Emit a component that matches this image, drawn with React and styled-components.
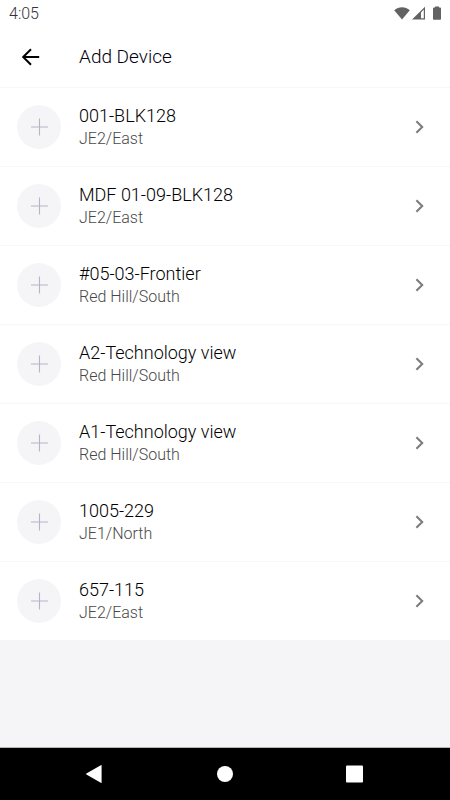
import React from "react";
import styled, { createGlobalStyle } from "styled-components";

const GlobalStyle = createGlobalStyle`
  * {
    box-sizing: border-box;
  }
  body {
    margin: 0;
    background-color: #f5f5f8;
    font-family: Roboto, "Liberation Sans", sans-serif;
    font-weight: 300;
  }
`;

const Screen = styled.div`
  display: flex;
  flex-direction: column;
  min-height: 100vh;
`;

const StatusBar = styled.div`
  display: flex;
  align-items: center;
  justify-content: space-between;
  height: 27px;
  padding: 0 8px 0 9px;
  background-color: #fff;
  color: #626262;
`;

const Clock = styled.span`
  color: #333;
  font-size: 16px;
  line-height: 28px;
`;

const StatusIcons = styled.svg`
  display: block;
  width: 48px;
  height: 16px;
`;

const Header = styled.header`
  display: flex;
  align-items: center;
  height: 60px;
  padding: 0 18px;
  background-color: #fff;
`;

const BackButton = styled.button`
  display: flex;
  width: 61px;
  padding: 0;
  border: none;
  background: none;
  color: #000;
  cursor: pointer;
`;

const Title = styled.h1`
  margin: 0;
  color: #000010;
  font-size: 19px;
  font-weight: 300;
  line-height: 24px;
`;

const DeviceList = styled.ul`
  margin: 0;
  padding: 0;
  list-style: none;
`;

const DeviceItem = styled.li`
  border-top: 1px solid #f7f7f9;
  background-color: #fff;
`;

const DeviceButton = styled.button`
  display: flex;
  align-items: center;
  width: 100%;
  height: 78px;
  padding: 0 18px 0 17px;
  border: none;
  background: none;
  font-family: inherit;
  font-weight: inherit;
  text-align: left;
  cursor: pointer;
`;

const PlusCircle = styled.span`
  display: flex;
  align-items: center;
  justify-content: center;
  flex: none;
  width: 44px;
  height: 44px;
  margin-right: 18px;
  border-radius: 50%;
  background-color: #f5f5f8;
`;

const DeviceText = styled.span`
  display: flex;
  flex: 1;
  flex-direction: column;
`;

const DeviceName = styled.span`
  color: #000;
  font-size: 18px;
  line-height: 24px;
`;

const DevicePlace = styled.span`
  color: #484848;
  font-size: 16px;
  line-height: 22px;
`;

const Chevron = styled.svg`
  flex: none;
  margin-right: 7px;
`;

const NavBar = styled.nav`
  display: flex;
  align-items: center;
  justify-content: space-between;
  height: 53px;
  margin-top: auto;
  padding: 0 82px;
  border-top: 1px solid #b5b5b5;
  background-color: #000;
`;

const NavButton = styled.button`
  display: flex;
  padding: 0;
  border: none;
  background: none;
  color: #fff;
  cursor: pointer;
`;

const devices = [
  { name: "001-BLK128", place: "JE2/East" },
  { name: "MDF 01-09-BLK128", place: "JE2/East" },
  { name: "#05-03-Frontier", place: "Red Hill/South" },
  { name: "A2-Technology view", place: "Red Hill/South" },
  { name: "A1-Technology view", place: "Red Hill/South" },
  { name: "1005-229", place: "JE1/North" },
  { name: "657-115", place: "JE2/East" },
];

function Device({ name, place }) {
  return (
    <DeviceItem>
      <DeviceButton>
        <PlusCircle>
          <svg width="18" height="18" viewBox="0 0 18 18" aria-hidden="true">
            <path d="M9.5 0.5V17.5M1 9H18" stroke="#b4b5c8" strokeWidth="1.1" />
          </svg>
        </PlusCircle>
        <DeviceText>
          <DeviceName>{name}</DeviceName>
          <DevicePlace>{place}</DevicePlace>
        </DeviceText>
        <Chevron width="10" height="14" viewBox="0 0 10 14" aria-hidden="true">
          <path d="M1.4 1.2L7.2 7L1.4 12.8" fill="none" stroke="#7d7d7d" strokeWidth="2.1" />
        </Chevron>
      </DeviceButton>
    </DeviceItem>
  );
}

function App() {
  return (
    <Screen>
      <GlobalStyle />
      <StatusBar>
        <Clock>4:05</Clock>
        <StatusIcons viewBox="0 0 48 16" fill="currentColor" aria-hidden="true">
          <path d="M0.2 4.2C4.6 0.2 11.4 0.2 15.8 4.2L8 13.4Z" />
          <path d="M31 0.8V13.4H18ZM29.8 3.6L27 6.4V12.2H29.8Z" fillRule="evenodd" />
          <path d="M41 0.4h4v1h1q1 0 1 1v10.6q0 0.7 -0.7 0.7h-6.6q-0.7 0 -0.7 -0.7v-10.6q0 -1 1 -1h1z" />
        </StatusIcons>
      </StatusBar>
      <Header>
        <BackButton aria-label="Back">
          <svg width="24" height="24" viewBox="0 0 24 24" aria-hidden="true">
            <path d="M21.2 12H5.2M13 4.3L5.2 12L13 19.7" fill="none" stroke="currentColor" strokeWidth="2" />
          </svg>
        </BackButton>
        <Title>Add Device</Title>
      </Header>
      <DeviceList>
        {devices.map((device) => (
          <Device key={device.name} name={device.name} place={device.place} />
        ))}
      </DeviceList>
      <NavBar>
        <NavButton aria-label="Back">
          <svg width="24" height="20" viewBox="0 0 24 20" fill="currentColor" aria-hidden="true">
            <path d="M19.6 1.6V18.4Q19.6 19.3 18.8 18.8L4.4 10.6Q3.6 10 4.4 9.4L18.8 1.2Q19.6 0.7 19.6 1.6Z" />
          </svg>
        </NavButton>
        <NavButton aria-label="Home">
          <svg width="16" height="16" viewBox="0 0 16 16" fill="currentColor" aria-hidden="true">
            <circle cx="8" cy="8" r="8" />
          </svg>
        </NavButton>
        <NavButton aria-label="Recent apps">
          <svg width="24" height="18" viewBox="0 0 24 18" fill="currentColor" aria-hidden="true">
            <rect x="2" y="0.5" width="17" height="17" rx="1" />
          </svg>
        </NavButton>
      </NavBar>
    </Screen>
  );
}

export default App;
